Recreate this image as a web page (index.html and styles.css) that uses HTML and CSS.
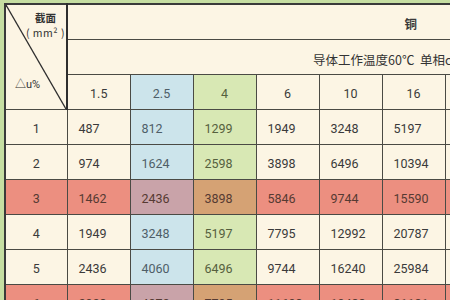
FILE: index.html
```html
<!DOCTYPE html>
<html lang="zh">
<head>
<meta charset="utf-8">
<link rel="stylesheet" href="styles.css">
</head>
<body>
<table class="grid">
  <colgroup>
    <col class="c-first">
    <col class="c-num"><col class="c-num"><col class="c-num"><col class="c-num"><col class="c-num"><col class="c-num"><col class="c-num"><col class="c-num"><col class="c-num"><col class="c-num"><col class="c-num">
  </colgroup>
  <tr class="h1">
    <td rowspan="3" class="corner">
      <svg class="diag" viewBox="0 0 100 100" preserveAspectRatio="none"><line x1="0" y1="0" x2="100" y2="100" stroke="#2e2e2e" stroke-width="1.3" vector-effect="non-scaling-stroke"/></svg>
      <div class="corner-top"><div class="corner-lbl"><span class="sec">截面</span><span class="unit">( mm² )</span></div></div>
      <div class="corner-bot">△u%</div>
    </td>
    <td colspan="11" class="metal">铜</td>
  </tr>
  <tr class="h2">
    <td colspan="11" class="cond">导体工作温度60℃&nbsp; 单相cosφ=1</td>
  </tr>
  <tr class="h3">
    <td>1.5</td><td class="blue">2.5</td><td class="green">4</td><td>6</td><td>10</td><td>16</td><td>25</td><td>35</td><td>50</td><td>70</td><td>95</td>
  </tr>
  <tr class="row">
    <td class="idx">1</td><td>487</td><td class="blue">812</td><td class="green">1299</td><td>1949</td><td>3248</td><td>5197</td><td>8120</td><td>11368</td><td>16240</td><td>22736</td>
  </tr>
  <tr class="row">
    <td class="idx">2</td><td>974</td><td class="blue">1624</td><td class="green">2598</td><td>3898</td><td>6496</td><td>10394</td><td>16240</td><td>22736</td><td>32480</td><td>45472</td>
  </tr>
  <tr class="row red">
    <td class="idx">3</td><td>1462</td><td class="blue">2436</td><td class="green">3898</td><td>5846</td><td>9744</td><td>15590</td><td>24360</td><td>34104</td><td>48720</td><td>68208</td>
  </tr>
  <tr class="row">
    <td class="idx">4</td><td>1949</td><td class="blue">3248</td><td class="green">5197</td><td>7795</td><td>12992</td><td>20787</td><td>32480</td><td>45472</td><td>64960</td><td>90944</td>
  </tr>
  <tr class="row">
    <td class="idx">5</td><td>2436</td><td class="blue">4060</td><td class="green">6496</td><td>9744</td><td>16240</td><td>25984</td><td>40600</td><td>56840</td><td>81200</td><td>113680</td>
  </tr>
  <tr class="row red">
    <td class="idx">6</td><td>2923</td><td class="blue">4872</td><td class="green">7795</td><td>11693</td><td>19488</td><td>31181</td><td>48720</td><td>68208</td><td>97440</td><td>136416</td>
  </tr>
</table>
</body>
</html>
```
FILE: styles.css
```css
html, body {
  margin: 0;
  height: 300px;
  overflow: hidden;
}
body {
  background: #c6dea2;
  padding: 3px 0 0 4px;
  font-family: Roboto, "Noto Sans CJK SC", sans-serif;
  color: #3a3a3a;
}
.grid {
  border-collapse: collapse;
  table-layout: fixed;
  width: 755px;
  background: #fcf5e4;
  border-top: 2px solid #3a3a3a;
  border-left: 2px solid #3a3a3a;
}
.c-first { width: 62px; }
.c-num { width: 63px; }
.grid td {
  border: 1px solid #4a4a44;
  padding: 0;
  font-size: 12.5px;
  white-space: nowrap;
  overflow: hidden;
}
.h1 td { height: 31px; }
.h2 td { height: 30px; }
.h3 td { height: 32px; text-align: center; padding-top: 2px; }
.row td { height: 31px; padding: 3px 0 0 11px; }
.row td.idx { text-align: center; padding-left: 0; }
.grid td.corner {
  position: relative;
  border-right: 2px solid #2e2e2e;
  vertical-align: top;
  padding: 0;
}
.diag {
  position: absolute;
  left: 0; top: 0;
  width: 100%; height: 100%;
}
.corner-top {
  display: flex;
  justify-content: flex-end;
  padding: 6px 1px 0 0;
}
.corner-lbl {
  display: flex;
  flex-direction: column;
  align-items: center;
  font-family: "Noto Sans CJK SC", sans-serif;
  font-size: 10.5px;
  line-height: 13px;
  color: #333;
}
.sec { font-weight: 700; }
.unit { letter-spacing: 0.5px; margin-top: 2px; }
.corner-bot {
  padding: 36px 0 0 9px;
  font-size: 11px;
  color: #333;
}
.metal {
  text-align: center;
  font-family: "Noto Sans CJK SC", sans-serif;
  font-weight: 700;
  font-size: 11px;
  padding: 3px 6px 0 0 !important;
}
.cond {
  font-family: "Noto Sans CJK SC", sans-serif;
  font-size: 11.5px;
  padding: 4px 0 0 245px !important;
  color: #333;
}
.blue { background: #cce4eb; color: #4e5e68; }
.green { background: #d8e8b4; color: #55603e; }
.red td { background: #ec8f80; color: #553a32; }
.red td.blue { background: #c9a3a9; }
.red td.green { background: #d5a274; }
```
